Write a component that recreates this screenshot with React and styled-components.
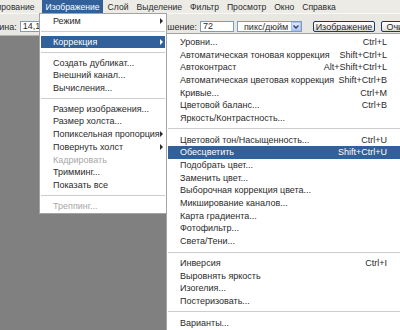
import styled, { createGlobalStyle } from "styled-components";

const GlobalStyle = createGlobalStyle`
  html, body { margin: 0; padding: 0; background: #808080; }
  body { font-family: "Liberation Sans", Arial, sans-serif; }
`;

const imageMenu = [
  { label: "Режим", sub: true },
  "sep",
  { label: "Коррекция", sub: true, active: true },
  "sep",
  { label: "Создать дубликат..." },
  { label: "Внешний канал..." },
  { label: "Вычисления..." },
  "sep",
  { label: "Размер изображения..." },
  { label: "Размер холста..." },
  { label: "Попиксельная пропорция", sub: true },
  { label: "Повернуть холст", sub: true },
  { label: "Кадрировать", disabled: true },
  { label: "Тримминг..." },
  { label: "Показать все" },
  "sep",
  { label: "Треппинг...", disabled: true },
];

const adjustMenu = [
  { label: "Уровни...", key: "Ctrl+L" },
  { label: "Автоматическая тоновая коррекция", key: "Shift+Ctrl+L" },
  { label: "Автоконтраст", key: "Alt+Shift+Ctrl+L" },
  { label: "Автоматическая цветовая коррекция", key: "Shift+Ctrl+B" },
  { label: "Кривые...", key: "Ctrl+M" },
  { label: "Цветовой баланс...", key: "Ctrl+B" },
  { label: "Яркость/Контрастность..." },
  "sep",
  { label: "Цветовой тон/Насыщенность...", key: "Ctrl+U" },
  { label: "Обесцветить", key: "Shift+Ctrl+U", active: true },
  { label: "Подобрать цвет..." },
  { label: "Заменить цвет..." },
  { label: "Выборочная коррекция цвета..." },
  { label: "Микширование каналов..." },
  { label: "Карта градиента..." },
  { label: "Фотофильтр..." },
  { label: "Света/Тени..." },
  "sep",
  { label: "Инверсия", key: "Ctrl+I" },
  { label: "Выровнять яркость" },
  { label: "Изогелия..." },
  { label: "Постеризовать..." },
  "sep",
  { label: "Варианты..." },
];

const titles = ["Редактирование", "Изображение", "Слой", "Выделение", "Фильтр", "Просмотр", "Окно", "Справка"];

const App = () => {
  return (
    <>
      <GlobalStyle />
      <Screen>
        <MenuBar>
          {titles.map((t, i) => (
            <MenuTitle key={t} $active={i === 1} $first={i === 0}>
              {t}
            </MenuTitle>
          ))}
        </MenuBar>
        <OptionsBar>
          <SizeGroup>
            <Label $cut>Ширина:</Label>
            <Field $w={40}>14,111 см</Field>
            <Spacer />
            <Label>Разрешение:</Label>
          </SizeGroup>
          <Field $w={34}>72</Field>
          <Select>
            <span>пикс/дюйм</span>
            <DropButton>
              <svg width="6" height="4" viewBox="0 0 6 4">
                <path d="M0.5 0.5 L3 3 L5.5 0.5" stroke="#2d3e66" strokeWidth="1.3" fill="none" />
              </svg>
            </DropButton>
          </Select>
          <Button $w={62}>Изображение</Button>
          <Button $w={50}>Очистить</Button>
        </OptionsBar>
        <Workspace />

        <Menu $left={39} $top={13} $w={128}>
          {imageMenu.map((item, i) =>
            item === "sep" ? (
              <Separator key={i} $h={8} />
            ) : (
              <Item key={i} $active={item.active} $disabled={item.disabled} $indent={12} $right={2}>
                <span>{item.label}</span>
                {item.sub && <Arrow />}
              </Item>
            )
          )}
        </Menu>

        <Menu $left={166} $top={33} $w={243} $pad={1.5}>
          {adjustMenu.map((item, i) =>
            item === "sep" ? (
              <Separator key={i} $h={9} />
            ) : (
              <Item key={i} $active={item.active} $indent={12} $right={20}>
                <span>{item.label}</span>
                {item.key && <span>{item.key}</span>}
              </Item>
            )
          )}
        </Menu>
      </Screen>
    </>
  );
};

const Screen = styled.div`
  position: relative;
  width: 400px;
  height: 330px;
  overflow: hidden;
  display: flex;
  flex-direction: column;
  font-family: "Liberation Sans", Arial, sans-serif;
  font-size: 9px;
  color: #2b2b2b;
`;

const MenuBar = styled.div`
  display: flex;
  align-items: stretch;
  height: 13px;
  background: #ecebe6;
  gap: 2px;
  font-size: 8.6px;
  white-space: nowrap;
`;

const MenuTitle = styled.div`
  display: flex;
  align-items: center;
  padding: 0 3px;
  margin-left: ${(p) => (p.$first ? "-34px" : "0")};
  margin-right: ${(p) => (p.$first ? "3px" : "0")};
  background: ${(p) => (p.$active ? "#31609a" : "transparent")};
  color: ${(p) => (p.$active ? "#fff" : "#2b2b2b")};
`;

const OptionsBar = styled.div`
  display: flex;
  align-items: center;
  box-sizing: border-box;
  height: 22px;
  padding-top: 4px;
  background: #e8e7e1;
  border-top: 1px solid #f8f8f6;
  white-space: nowrap;
`;

const SizeGroup = styled.div`
  display: flex;
  align-items: center;
  width: 200px;
  flex-shrink: 0;
`;

const Spacer = styled.div`
  flex: 1;
`;

const Label = styled.span`
  margin-left: ${(p) => (p.$cut ? "-19px" : "0")};
  margin-right: 3px;
`;

const Field = styled.div`
  box-sizing: border-box;
  width: ${(p) => p.$w}px;
  height: 11px;
  line-height: 9px;
  padding: 0 2px;
  background: #fff;
  border: 1px solid #7f9db9;
  margin-right: 3px;
  flex-shrink: 0;
`;

const Select = styled.div`
  box-sizing: border-box;
  display: flex;
  align-items: center;
  justify-content: space-between;
  width: 65px;
  height: 11px;
  padding-left: 6px;
  background: #fff;
  border: 1px solid #7f9db9;
  margin-right: 11px;
  flex-shrink: 0;
`;

const DropButton = styled.div`
  display: flex;
  align-items: center;
  justify-content: center;
  width: 10px;
  height: 9px;
  background: linear-gradient(#dfe9fd, #b4c8f5);
  border: 1px solid #a9bff0;
  box-sizing: border-box;
`;

const Button = styled.div`
  box-sizing: border-box;
  width: ${(p) => p.$w}px;
  height: 11px;
  display: flex;
  align-items: center;
  justify-content: center;
  border: 1px solid #1b3a6b;
  border-radius: 2px;
  background: linear-gradient(#ffffff, #ecebe6 70%, #d8d5cc);
  margin-right: 6px;
  flex-shrink: 0;
`;

const Workspace = styled.div`
  flex: 1;
  background: #808080;
  border-top: 1px solid #b4b4b4;
`;

const Menu = styled.div`
  position: absolute;
  left: ${(p) => p.$left}px;
  top: ${(p) => p.$top}px;
  width: ${(p) => p.$w}px;
  box-sizing: border-box;
  padding: ${(p) => p.$pad || 1}px 1px;
  background: #fff;
  border: 1px solid #a3a3a3;
  display: flex;
  flex-direction: column;
  white-space: nowrap;
`;

const Item = styled.div`
  display: flex;
  align-items: center;
  justify-content: space-between;
  height: 12.7px;
  padding: 0 ${(p) => p.$right}px 0 ${(p) => p.$indent}px;
  background: ${(p) => (p.$active ? "#31609a" : "transparent")};
  color: ${(p) => (p.$active ? "#fff" : p.$disabled ? "#a7a7a7" : "#2b2b2b")};
`;

const Arrow = styled.span`
  width: 0;
  height: 0;
  border-left: 3px solid currentColor;
  border-top: 3px solid transparent;
  border-bottom: 3px solid transparent;
`;

const Separator = styled.div`
  height: ${(p) => p.$h}px;
  display: flex;
  align-items: center;
  &::after {
    content: "";
    flex: 1;
    height: 1px;
    background: #cdcdcd;
  }
`;

export default App;
